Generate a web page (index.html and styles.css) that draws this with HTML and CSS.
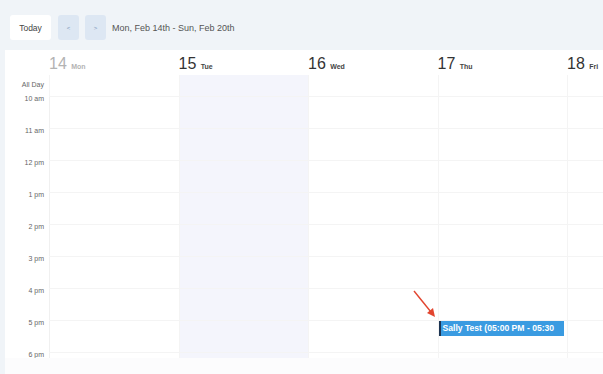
FILE: index.html
```html
<!DOCTYPE html>
<html lang="en">
<head>
    <meta charset="UTF-8">
    <meta name="viewport" content="width=device-width, initial-scale=1.0">
    <title>Week View</title>
    <link rel="stylesheet" href="styles.css">
</head>
<body>
    <div class="toolbar">
        <button class="today">Today</button>
        <button class="nav">&lt;</button>
        <button class="nav">&gt;</button>
        <span class="range">Mon, Feb 14th - Sun, Feb 20th</span>
    </div>

    <div class="panel">
        <div class="row head">
            <div class="gutter"></div>
            <div class="day past"><b>14</b> <span>Mon</span></div>
            <div class="day"><b>15</b> <span>Tue</span></div>
            <div class="day"><b>16</b> <span>Wed</span></div>
            <div class="day"><b>17</b> <span>Thu</span></div>
            <div class="day"><b>18</b> <span>Fri</span></div>
        </div>

        <div class="row allday">
            <div class="gutter">All Day</div>
            <div class="cell"></div>
            <div class="cell today-col"></div>
            <div class="cell"></div>
            <div class="cell"></div>
            <div class="cell"></div>
        </div>

        <div class="row hour"><div class="gutter"><span>10 am</span></div><div class="cell"></div><div class="cell today-col"></div><div class="cell"></div><div class="cell"></div><div class="cell"></div></div>
        <div class="row hour"><div class="gutter"><span>11 am</span></div><div class="cell"></div><div class="cell today-col"></div><div class="cell"></div><div class="cell"></div><div class="cell"></div></div>
        <div class="row hour"><div class="gutter"><span>12 pm</span></div><div class="cell"></div><div class="cell today-col"></div><div class="cell"></div><div class="cell"></div><div class="cell"></div></div>
        <div class="row hour"><div class="gutter"><span>1 pm</span></div><div class="cell"></div><div class="cell today-col"></div><div class="cell"></div><div class="cell"></div><div class="cell"></div></div>
        <div class="row hour"><div class="gutter"><span>2 pm</span></div><div class="cell"></div><div class="cell today-col"></div><div class="cell"></div><div class="cell"></div><div class="cell"></div></div>
        <div class="row hour"><div class="gutter"><span>3 pm</span></div><div class="cell"></div><div class="cell today-col"></div><div class="cell"></div><div class="cell"></div><div class="cell"></div></div>
        <div class="row hour"><div class="gutter"><span>4 pm</span></div><div class="cell"></div><div class="cell today-col"></div><div class="cell"></div><div class="cell"></div><div class="cell"></div></div>
        <div class="row hour"><div class="gutter"><span>5 pm</span></div><div class="cell"></div><div class="cell today-col"></div><div class="cell"></div>
            <div class="cell">
                <div class="event">Sally Test (05:00 PM - 05:30 PM)</div>
            </div>
            <div class="cell"></div></div>
        <div class="row hour"><div class="gutter"><span>6 pm</span></div><div class="cell"></div><div class="cell today-col"></div><div class="cell"></div><div class="cell"></div><div class="cell"></div></div>
    </div>
    <div class="foot"></div>

    <svg class="arrow" width="40" height="40" viewBox="0 0 40 40">
        <line x1="4" y1="4" x2="21" y2="25" stroke="#e2452f" stroke-width="1.4"/>
        <polygon points="25,30 17,26 23,21" fill="#e2452f"/>
    </svg>
</body>
</html>
```

FILE: styles.css
```css
body {
    margin: 0;
    background-color: #f0f4f8;
    font-family: "Liberation Sans", Arial, sans-serif;
    color: #444;
    overflow: hidden;
}
.toolbar {
    display: flex;
    align-items: center;
    gap: 6px;
    height: 25px;
    padding: 15px 10px 10px;
}
.toolbar button {
    height: 25px;
    border: none;
    border-radius: 3px;
    font-family: inherit;
    padding: 0;
}
.today {
    width: 41px;
    margin-right: 1px;
    background-color: #fff;
    color: #444;
    font-size: 8.5px;
}
.nav {
    width: 21px;
    background-color: #dde7f3;
    color: #7a93b8;
    font-size: 6px;
}
.range {
    font-size: 9px;
    color: #555;
}
.panel {
    margin-left: 5px;
    height: 308px;
    background-color: #fff;
    overflow: hidden;
}
.row {
    display: grid;
    grid-template-columns: 44px repeat(5, 129.5px);
}
.head {
    height: 25px;
}
.day {
    padding: 5px 0 0 0;
    white-space: nowrap;
    color: #333;
}
.day b {
    font-size: 16px;
    font-weight: normal;
    line-height: 16px;
}
.day span {
    font-size: 7px;
    font-weight: bold;
    color: #444;
}
.day.past b,
.day.past span {
    color: #b3b3b3;
}
.allday {
    height: 21px;
}
.allday .gutter {
    font-size: 7px;
    line-height: 8px;
    padding-top: 6px;
    text-align: right;
    padding-right: 5px;
    color: #666;
}
.cell {
    border-left: 1px solid #f4f4f4;
    border-top: 1px solid #f4f4f4;
}
.allday .cell {
    border-top: none;
}
.today-col {
    background-color: #f4f5fc;
}
.hour {
    height: 32px;
}
.hour .gutter {
    border-right: 1px solid #f0f0f0;
    margin-right: -1px;
    text-align: right;
    padding-right: 5px;
    font-size: 7px;
    line-height: 8px;
    color: #666;
}
.hour .gutter span {
    display: block;
    margin-top: -1px;
}
.hour .cell:nth-child(2) {
    border-left: none;
}
.event {
    box-sizing: border-box;
    width: 125px;
    height: 15px;
    margin-top: 0;
    padding-left: 2px;
    background-color: #3a9be1;
    border-left: 2px solid #1d3553;
    color: #fff;
    font-size: 8.6px;
    font-weight: bold;
    line-height: 14px;
    overflow: hidden;
}
.foot {
    height: 16px;
    margin-left: 5px;
    background-color: #fcfcfd;
}
.arrow {
    position: absolute;
    left: 410px;
    top: 287px;
}
```
